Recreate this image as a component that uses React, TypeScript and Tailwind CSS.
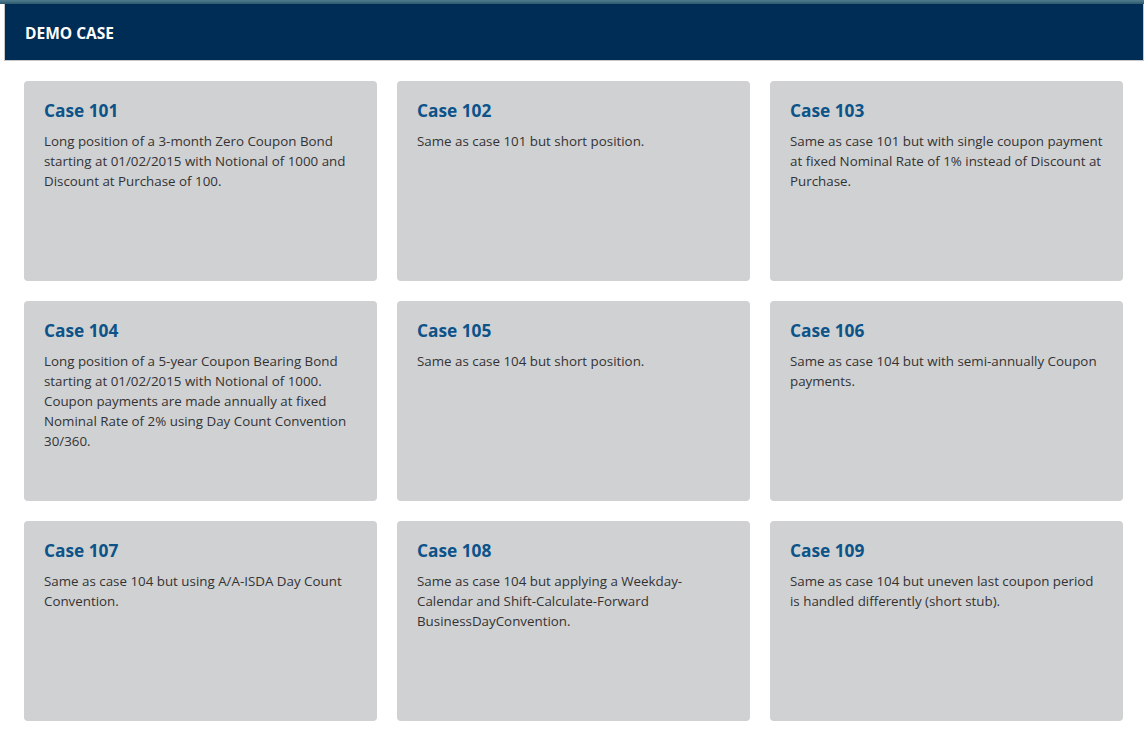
import React from "react";

const cases = [
  { t: "Case 101", d: "Long position of a 3-month Zero Coupon Bond starting at 01/02/2015 with Notional of 1000 and Discount at Purchase of 100." },
  { t: "Case 102", d: "Same as case 101 but short position." },
  { t: "Case 103", d: "Same as case 101 but with single coupon payment at fixed Nominal Rate of 1% instead of Discount at Purchase." },
  { t: "Case 104", d: "Long position of a 5-year Coupon Bearing Bond starting at 01/02/2015 with Notional of 1000. Coupon payments are made annually at fixed Nominal Rate of 2% using Day Count Convention 30/360." },
  { t: "Case 105", d: "Same as case 104 but short position." },
  { t: "Case 106", d: "Same as case 104 but with semi-annually Coupon payments." },
  { t: "Case 107", d: "Same as case 104 but using A/A-ISDA Day Count Convention." },
  { t: "Case 108", d: "Same as case 104 but applying a Weekday-Calendar and Shift-Calculate-Forward BusinessDayConvention." },
  { t: "Case 109", d: "Same as case 104 but uneven last coupon period is handled differently (short stub)." },
];

export default function App() {
  return (
    <div className="w-[1144px] h-[735px] bg-white overflow-hidden" style={{ fontFamily: '"Open Sans", "Noto Sans", sans-serif' }}>
      <div className="h-[4px] bg-gradient-to-b from-[#4f7d90] to-[#2f5a6e]" />
      <div className="ml-[4px] border border-[#c8c8c8] border-t-0 bg-[#002d56] h-[57px] flex items-center pl-[20px] pt-[3px]">
        <span className="text-white font-bold text-[15.5px]">DEMO CASE</span>
      </div>
      <div className="grid grid-cols-[353px_353px_353px] gap-[20px] pl-[24px] pt-[20px]">
        {cases.map((c) => (
          <div key={c.t} className="h-[200px] bg-[#d0d1d3] rounded-[4px] pl-[20px] pr-[19px] pt-[17px]">
            <div className="text-[#0b5389] font-bold text-[17.3px] leading-[26px]">{c.t}</div>
            <p className="mt-[7px] text-[13.35px] leading-[20px] text-[#333]">{c.d}</p>
          </div>
        ))}
      </div>
    </div>
  );
}
